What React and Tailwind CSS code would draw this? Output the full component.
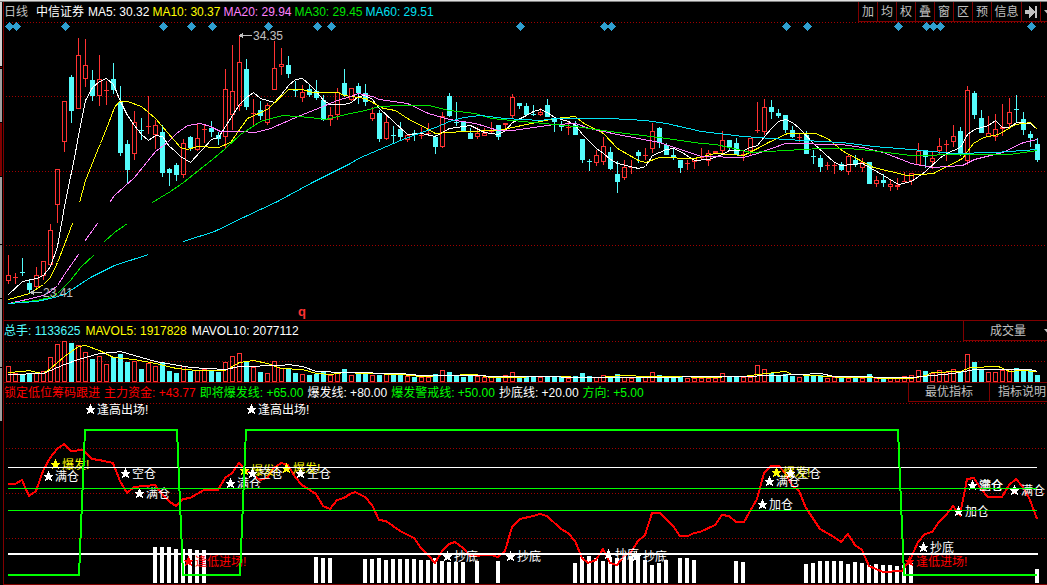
import React from "react";

// [high, body top, body bottom, low, up]; equal top and bottom draw a doji.
const CANDLES = [
  [255, 275, 281, 284, 1], [273, 277, 277, 284, 1], [258, 272, 272, 276, 0], [280, 283, 290, 293, 0],
  [267, 275, 287, 288, 1], [261, 261, 276, 280, 1], [224, 230, 265, 265, 1], [169, 169, 205, 223, 1],
  [101, 101, 142, 152, 1], [75, 77, 111, 123, 0], [38, 55, 109, 109, 1], [39, 65, 79, 87, 1],
  [70, 80, 96, 101, 0], [55, 79, 96, 106, 1], [81, 90, 90, 105, 1], [63, 79, 90, 94, 0],
  [86, 102, 153, 156, 0], [140, 144, 170, 184, 0], [111, 122, 154, 160, 1], [118, 130, 130, 140, 0],
  [96, 126, 126, 134, 1], [120, 125, 135, 149, 1], [125, 132, 173, 177, 0], [168, 169, 173, 186, 0],
  [163, 165, 175, 181, 0], [139, 143, 175, 178, 1], [136, 137, 148, 151, 0], [124, 138, 150, 151, 1],
  [125, 129, 129, 143, 1], [121, 128, 132, 137, 0], [132, 135, 139, 145, 0], [69, 89, 137, 148, 1],
  [45, 91, 115, 130, 1], [35, 62, 106, 111, 1], [59, 69, 107, 110, 0], [99, 113, 113, 127, 1],
  [101, 110, 116, 120, 0], [103, 105, 123, 125, 1], [41, 68, 90, 90, 1], [48, 64, 67, 75, 1],
  [56, 65, 74, 78, 0], [81, 90, 90, 97, 0], [85, 92, 98, 102, 1], [85, 89, 95, 97, 0],
  [80, 91, 98, 100, 0], [95, 100, 120, 121, 0], [107, 115, 120, 126, 1], [88, 92, 115, 120, 1],
  [69, 83, 95, 97, 0], [88, 88, 100, 101, 1], [83, 86, 93, 104, 0], [84, 93, 102, 106, 0],
  [107, 113, 119, 121, 1], [110, 113, 139, 142, 0], [115, 122, 139, 140, 1], [126, 135, 135, 143, 0],
  [122, 129, 137, 140, 0], [134, 135, 140, 142, 1], [130, 133, 133, 141, 0], [127, 135, 135, 139, 1],
  [123, 133, 133, 135, 1], [135, 137, 147, 154, 0], [112, 116, 147, 148, 1], [93, 96, 116, 117, 0],
  [102, 122, 122, 126, 0], [121, 121, 131, 132, 0], [128, 133, 139, 139, 0], [127, 133, 137, 139, 1],
  [128, 133, 136, 136, 1], [122, 131, 131, 134, 1], [125, 125, 137, 140, 0], [123, 123, 125, 130, 1],
  [94, 97, 116, 118, 1], [103, 103, 106, 109, 0], [103, 106, 115, 116, 0], [105, 114, 114, 116, 0],
  [108, 112, 115, 116, 1], [99, 105, 117, 117, 0], [117, 118, 122, 132, 0], [121, 124, 127, 131, 0],
  [122, 127, 127, 135, 1], [121, 125, 135, 135, 0], [139, 139, 160, 163, 0], [159, 161, 161, 171, 0],
  [150, 155, 163, 166, 1], [137, 146, 162, 165, 1], [147, 152, 169, 170, 0], [161, 174, 182, 193, 0],
  [160, 167, 178, 180, 1], [160, 167, 167, 174, 1], [150, 152, 156, 163, 0], [148, 155, 155, 160, 1],
  [123, 131, 149, 153, 1], [127, 128, 143, 148, 0], [143, 145, 155, 155, 0], [148, 155, 158, 160, 0],
  [160, 160, 168, 173, 0], [160, 163, 163, 170, 1], [158, 158, 162, 169, 1], [148, 157, 157, 159, 1],
  [150, 153, 161, 166, 1], [151, 151, 153, 154, 1], [131, 140, 151, 153, 1], [140, 140, 148, 150, 0],
  [138, 143, 155, 155, 0], [150, 154, 154, 161, 1], [138, 138, 151, 155, 1], [102, 130, 130, 133, 1],
  [99, 107, 132, 135, 1], [100, 107, 112, 119, 0], [109, 113, 116, 118, 0], [115, 115, 130, 133, 0],
  [126, 130, 137, 138, 0], [133, 137, 137, 142, 1], [131, 135, 154, 154, 0], [150, 156, 156, 164, 0],
  [155, 158, 167, 172, 0], [162, 165, 165, 170, 1], [162, 165, 165, 174, 1], [162, 164, 170, 171, 0],
  [154, 156, 172, 175, 1], [155, 160, 165, 167, 0], [158, 162, 168, 172, 1], [162, 162, 184, 184, 0],
  [176, 180, 184, 187, 1], [174, 180, 183, 187, 0], [179, 184, 187, 191, 1], [178, 185, 187, 190, 1],
  [172, 181, 181, 182, 1], [173, 173, 181, 185, 1], [143, 151, 165, 165, 1], [150, 150, 157, 168, 0],
  [152, 158, 162, 169, 1], [138, 146, 151, 154, 1], [140, 144, 144, 161, 1], [125, 136, 142, 147, 1],
  [127, 131, 154, 156, 0], [86, 90, 161, 165, 1], [91, 93, 115, 119, 0], [110, 118, 133, 133, 0],
  [116, 133, 137, 137, 1], [114, 129, 137, 141, 1], [104, 127, 129, 136, 1], [98, 112, 124, 128, 1],
  [95, 109, 109, 122, 0], [112, 119, 130, 135, 0], [131, 134, 138, 147, 0], [138, 144, 160, 162, 0],
];

// Top edge of each volume bar.
const VOLUMES = [
  366, 373, 375, 374, 373, 371, 357, 344, 341, 343, 345, 352, 359, 356, 364, 357, 354, 362, 361, 369,
  363, 366, 362, 371, 373, 366, 371, 370, 369, 371, 372, 362, 356, 353, 361, 367, 372, 373, 361, 368,
  369, 373, 374, 375, 374, 371, 375, 372, 369, 375, 373, 373, 375, 375, 374, 374, 374, 376, 377, 377,
  377, 374, 370, 372, 375, 377, 375, 376, 377, 377, 378, 375, 372, 376, 376, 376, 377, 376, 377, 377,
  378, 376, 373, 376, 377, 375, 376, 374, 377, 378, 376, 376, 372, 375, 377, 378, 376, 378, 378, 378,
  378, 378, 373, 377, 377, 377, 377, 365, 369, 373, 376, 374, 376, 377, 375, 375, 375, 378, 377, 377,
  378, 378, 378, 374, 378, 377, 378, 377, 376, 375, 370, 371, 373, 370, 372, 369, 372, 354, 362, 370,
  372, 372, 370, 369, 368, 370, 370, 375,
];

const PRICE_LINES = [
  {
    color: "#fff",
    parts: [
      "8,294 22,281 36,278 43,275 50,266 57,246 64,206 75,152 78,135 85,100 92,87 99,81 106,78 113,84 120,101 127,115 134,125 141,134 148,140 155,135 162,136 169,146 174,150 180,156 190,162 201,150 211,139 218,137 225,126 232,115 239,104 246,97 253,92 260,98 274,102 281,94 288,85 295,79 302,78 309,84 316,91 323,100 330,104 344,104 351,102 358,96 365,95 372,99 379,108 393,121 407,134 421,133 435,136 442,132 449,128 470,125 484,132 498,134 505,130 512,122 526,115 533,111 540,109 547,112 554,117 568,121 575,125 582,134 596,148 603,153 610,159 617,163 638,168 645,166 652,155 666,149 673,148 680,151 694,160 708,159 722,154 729,150 743,150 750,147 757,145 764,136 771,128 778,121 785,119 792,122 799,128 813,143 834,162 841,165 862,163 869,167 883,175 898,184 911,181 925,171 939,158 946,153 960,147 967,134 974,129 988,125 995,120 1002,127 1009,127 1016,122 1030,123 1037,129",
    ],
  },
  {
    color: "#ff0",
    parts: [
      "8,299 22,295 29,293 43,284 50,277 57,262 64,244 72,223",
      "79,202 85,180 97,150 100,143 108,123 114,107 119,101 127,101 141,106 155,118 167,132 180,147 187,149 197,146 218,147 230,142 247,118 267,109 288,89 302,89 312,92 337,92 344,95 365,98 383,108 395,110 407,118 428,129 435,133 463,131 498,130 512,127 540,121 554,118 575,116 582,122 603,133 617,148 638,160 645,162 659,157 694,158 715,153 743,155 757,148 768,142 787,133 815,133 827,138 843,151 873,167 907,175 933,173 962,158 973,143 983,137 998,134 1015,124 1030,122 1037,129",
    ],
  },
  {
    color: "#ff80ff",
    parts: [
      "8,303 22,300 43,295 50,291 57,285 64,274 78,254",
      "84,241 97,223",
      "109,202 114,195 134,177 155,151 167,142 176,133 187,125 200,123 210,126 220,131 240,131 255,132 270,128 300,115 320,107 337,100 350,96 358,93 372,96 379,99 407,103 428,113 449,119 475,123 498,130 512,130 540,126 554,124 575,123 589,128 617,134 659,142 680,149 701,156 743,157 757,153 771,148 785,143 841,144 862,147 883,152 911,163 932,167 962,165 974,159 1002,152 1023,142 1037,139",
    ],
  },
  {
    color: "#00e600",
    parts: [
      "8,303 36,300 50,297 57,293 70,280 80,267 94,254",
      "104,241 114,232 127,223",
      "152,202 160,197 170,191 183,182 203,166 212,159 225,148 240,134 260,121 282,115 310,117 325,119 350,113 365,110 379,106 400,105 428,105 449,110 475,113 491,118 533,122 575,126 617,132 659,137 701,143 715,144 729,147 750,152 785,150 820,148 848,148 870,150 911,155 962,154 1009,154 1037,150",
    ],
  },
  {
    color: "#02e2f4",
    parts: [
      "8,303 36,301 50,298 64,294 90,277 114,265 148,254",
      "183,241 214,231 245,216 277,201 312,182 350,163 358,158 379,149 400,140 421,132 435,127 449,121 463,117 480,115 505,118 540,120 554,118 610,118 645,120 666,123 701,131 743,136 785,139 841,142 873,146 911,149 953,153 995,152 1037,149",
    ],
  },
];

const VOLUME_LINES = [
  {
    color: "#ff0",
    parts: [
      "8,372 22,371 29,370 36,372 43,373 50,368 64,356 78,346 85,345 99,350 113,357 134,359 155,363 176,368 197,370 225,370 239,362 253,360 267,363 281,368 302,369 316,373 330,374 344,372 365,373 400,374 420,376 445,375 475,374 490,377 512,377 540,376 600,377 620,375 650,376 680,376 701,377 743,376 757,374 775,372 785,371 792,374 813,375 841,377 911,378 925,375 932,372 960,371 970,367 998,366 1009,371 1020,370 1037,371",
    ],
  },
  {
    color: "#fff",
    parts: [
      "8,374 43,373 64,364 78,359 99,353 113,352 120,351 134,355 155,361 190,367 225,369 239,366 281,365 288,364 302,366 316,371 344,372 400,373 420,375 470,375 500,376 620,377 743,376 800,374 820,373 834,376 911,377 953,373 974,369 1030,369 1037,371",
    ],
  },
];

const FUND_LINE =
  "8,484 15,484 22,480 29,496 36,491 43,471 50,458 57,449 64,444 71,451 83,450 92,459 99,460 113,463 120,481 127,493 134,487 155,485 162,494 170,502 176,506 183,499 190,498 204,490 218,490 225,478 232,473 239,463 246,470 260,480 267,478 274,468 281,463 288,465 295,477 302,485 316,494 323,506 330,509 337,500 344,498 350,494 355,492 365,497 372,505 379,520 386,521 400,531 414,538 421,548 428,555 435,563 442,551 449,544 455,542 463,548 470,556 491,555 498,557 505,551 512,527 520,519 533,516 540,514 547,516 561,529 568,533 575,541 582,558 588,563 596,560 603,549 610,563 617,565 624,556 631,552 638,541 645,535 652,513 660,513 673,526 680,536 688,536 694,533 700,532 715,525 722,515 729,516 736,522 744,522 757,499 764,473 771,466 779,466 785,473 792,485 799,491 806,508 820,529 834,537 841,542 848,534 855,545 862,550 869,566 883,572 902,571 911,558 918,542 925,534 932,532 939,522 946,515 953,506 960,515 967,479 974,478 981,489 988,497 1002,497 1009,485 1016,479 1023,487 1030,500 1037,519";

const DIRECTION_LINE =
  "8,575 79,575 85,430 177,430 183,575 240,575 246,430 898,430 904,575 1037,575";

// First candle index of each run, then the bar tops in that run.
const BAR_RUNS = [
  [21, [547, 547, 547, 549, 549, 549, 550, 550]],
  [44, [557, 558, 558]],
  [51, [559, 559, 558, 560, 559, 559, 559, 559, 560, 560, 558, 561, 562, 562, 562]],
  [67, [561]],
  [70, [561]],
  [81, [563, 557, 556, 558, 561, 557, 558, 556, 556, 557, 560, 565, 563, 560]],
  [96, [558, 558, 560]],
  [104, [561, 562]],
  [114, [564, 563, 561, 561, 561, 561, 564, 562, 563, 565, 564, 565, 565, 566, 565, 563]],
  [147, [569]],
];

const SIGNALS = [
  [90, 409, "逢高出场!", "#fff"], [251, 409, "逢高出场!", "#fff"],
  [55, 464, "爆发!", "#ff0"], [48, 476, "满仓", "#fff"],
  [125, 473, "空仓", "#fff"], [139, 493, "满仓", "#fff"],
  [230, 483, "满仓", "#fff"], [244, 470, "爆发!", "#ff0"],
  [252, 473, "空仓", "#fff"], [286, 468, "爆发!", "#ff0"],
  [300, 473, "空仓", "#fff"], [188, 561, "逢低进场!", "#f00"],
  [447, 556, "抄底", "#fff"], [510, 556, "抄底", "#fff"],
  [608, 554, "抄底", "#fff"], [636, 556, "抄底", "#fff"],
  [769, 481, "满仓", "#fff"], [776, 472, "爆发!", "#ff0"],
  [790, 473, "空仓", "#fff"], [762, 504, "加仓", "#fff"],
  [923, 547, "抄底", "#fff"], [909, 561, "逢低进场!", "#f00"],
  [958, 511, "加仓", "#fff"], [972, 485, "满仓", "#fff"],
  [972, 485, "空仓", "#fff"], [1014, 490, "满仓", "#fff"],
];

const EVENTS = [9, 16, 65, 163, 191, 212, 268, 317, 331, 520, 604, 611, 786, 807, 898, 926, 933, 940, 1031];

const UP = "#ff3232";
const DOWN = "#54fcfc";
const xAt = (i) => 8 + 7 * i;

function Grid({ rows }) {
  return rows.map((y) => (
    <line key={y} x1="6" x2="1046" y1={y + 0.5} y2={y + 0.5} stroke="#a00000" strokeDasharray="1 2" />
  ));
}

function Lines({ lines }) {
  return lines.map((line) =>
    line.parts.map((points) => (
      <polyline key={line.color + points.slice(0, 8)} points={points} fill="none" stroke={line.color} transform="translate(.5 .5)" />
    ))
  );
}

function Candle({ x, data }) {
  const [high, top, bottom, low, up] = data;
  if (top === bottom) {
    const color = up ? UP : DOWN;
    return (
      <g fill={color}>
        <rect x={x} y={high} width="1" height={low - high} />
        <rect x={x - 2} y={top} width="5" height="1" />
      </g>
    );
  }
  if (!up) {
    return (
      <g fill={DOWN}>
        <rect x={x} y={high} width="1" height={low - high} />
        <rect x={x - 2} y={top} width="5" height={bottom - top} />
      </g>
    );
  }
  return (
    <g fill={UP}>
      <rect x={x} y={high} width="1" height={top - high} />
      <rect x={x} y={bottom} width="1" height={low - bottom} />
      <rect x={x - 1.5} y={top + 0.5} width="4" height={Math.max(1, bottom - top - 1)} fill="none" stroke={UP} />
    </g>
  );
}

function PriceChart() {
  return (
    <svg viewBox="4 22 1043 298" className="block h-auto w-full" shapeRendering="crispEdges" role="img" aria-label="日线 K线图">
      <Grid rows={[22, 96, 171, 245]} />
      {EVENTS.map((x) => (
        <path key={x} d={`M${x + 0.5} 22l4.5 4.5-4.5 4.5-4.5-4.5z`} fill="#2f9fd0" />
      ))}
      {CANDLES.map((data, i) => (
        <Candle key={i} x={xAt(i)} data={data} />
      ))}
      <Lines lines={PRICE_LINES} />
      <g fill="#c0c0c0" stroke="none" fontSize="12">
        <path d="M239 35.5l4-3v2.500h9v1h-9v2.500z" />
        <text x="253" y="40">34.35</text>
        <path d="M30 292.500l4-3v2.500h8v1h-8v2.500z" />
        <text x="43" y="297">23.41</text>
      </g>
      <text x="298" y="316" fontSize="13" fontWeight="700" fill={UP}>q</text>
    </svg>
  );
}

function VolumeChart() {
  return (
    <svg viewBox="4 341 1043 41" className="block h-auto w-full" shapeRendering="crispEdges" role="img" aria-label="成交量">
      <Grid rows={[341, 361]} />
      {VOLUMES.map((y, i) =>
        CANDLES[i][4] ? (
          <rect key={i} x={xAt(i) - 1.5} y={y + 0.5} width="4" height={381 - y} fill="none" stroke={UP} />
        ) : (
          <rect key={i} x={xAt(i) - 2} y={y} width="5" height={382 - y} fill={DOWN} />
        )
      )}
      <Lines lines={VOLUME_LINES} />
    </svg>
  );
}

function Signal({ x, y, label, color }) {
  return (
    <g fill={color}>
      <path
        d="M0-6l1.500 4h4.500l-3.600 2.800 1.400 4.400L0 2.600l-3.800 2.600 1.400-4.400L-6-2h4.500z"
        transform={`translate(${x + 0.5} ${y + 0.5})`}
      />
      <text x={x + 7} y={y + 5} fontSize="12">{label}</text>
    </g>
  );
}

function FundChart() {
  return (
    <svg viewBox="4 403 1043 181" className="block h-auto w-full" shapeRendering="crispEdges" role="img" aria-label="主力资金">
      <Grid rows={[403, 448, 493, 538]} />
      {BAR_RUNS.map(([start, tops]) =>
        tops.map((y, k) => (
          <rect key={start + k} x={xAt(start + k) - 2} y={y} width="4" height={583 - y} fill="#fff" />
        ))
      )}
      <polyline points={FUND_LINE} fill="none" stroke="#f00" strokeWidth="2" />
      {SIGNALS.map(([x, y, label, color], i) => (
        <Signal key={i} x={x} y={y} label={label} color={color} />
      ))}
      <rect x="8" y="467" width="1029" height="1" fill="#fff" />
      <rect x="8" y="488" width="1029" height="1" fill="#0f0" />
      <rect x="8" y="510" width="1029" height="1" fill="#0f0" />
      <rect x="8" y="553" width="1030" height="2" fill="#fff" />
      <polyline points={DIRECTION_LINE} fill="none" stroke="#0f0" strokeWidth="2" />
    </svg>
  );
}

function Readout({ items, gap = "gap-1" }) {
  return (
    <div className={`flex min-w-0 flex-1 overflow-hidden leading-5 whitespace-nowrap ${gap}`}>
      {items.map(([text, color]) => (
        <span key={text} className={color}>{text}</span>
      ))}
    </div>
  );
}

const TOOLS = ["加", "均", "权", "叠", "窗", "区", "预"];

export default function App() {
  return (
    <main className="flex min-h-screen flex-col overflow-hidden bg-black font-['Liberation_Sans','Noto_Sans_CJK_SC',sans-serif] text-xs text-[#c0c0c0]">
      <div className="h-[2px] border-b border-[#808080] bg-[#e0e0e0]" />
      <div className="flex flex-1">
        <div className="flex w-[3px] shrink-0 flex-col gap-px pr-px">
          <div className="h-16 bg-[#d0d0d0]" />
          <div className="h-px bg-[#800000]" />
          <div className="h-[53px] bg-[#a0a0a0]" />
          <div className="h-[53px] bg-[#800000]" />
          <div className="h-[67px] bg-[#a0a0a0]" />
          <div className="h-[53px] bg-[#a0a0a0]" />
          <div className="h-[68px] bg-[#a0a0a0]" />
          <div className="h-[53px] bg-[#a0a0a0]" />
        </div>
        <div className="min-w-0 flex-1 border-l border-[#800000]">
          <header className="flex h-5">
            <Readout
              gap="gap-[3px]"
              items={[
                ["日线", "mr-[5px]"],
                ["中信证券", "mr-px text-white"],
                ["MA5: 30.32", "text-white"],
                ["MA10: 30.37", "text-[#ffff00]"],
                ["MA20: 29.94", "text-[#ff80ff]"],
                ["MA30: 29.45", "text-[#00e600]"],
                ["MA60: 29.51", "text-[#02e2f4]"],
              ]}
            />
            <nav className="flex shrink-0 border-b border-[#800000]">
              {TOOLS.map((name) => (
                <button key={name} className="w-[19px] border-l border-[#800000] text-center leading-5">{name}</button>
              ))}
              <button className="w-[30px] border-l border-[#800000] text-center leading-5">信息</button>
              <button aria-label="跳到最新" className="flex w-[19px] items-center justify-center border-l border-[#800000]">
                <svg viewBox="0 0 12 12" className="size-3" fill="#c0c0c0" shapeRendering="crispEdges">
                  <path d="M0 4h4V0l6 6-6 6V8H0zM10 0h2v12h-2z" />
                </svg>
              </button>
              <button aria-label="更多" className="flex w-[7px] items-center overflow-hidden border-l border-[#800000] pl-[3px]">
                <svg viewBox="0 0 7 4" className="h-1 w-[7px] shrink-0" fill="#c0c0c0">
                  <path d="M0 0h7L3.500 4z" />
                </svg>
              </button>
            </nav>
          </header>
          <PriceChart />

          <section className="border-t border-[#800000]">
            <div className="flex h-5">
              <Readout
                gap="gap-[5px]"
                items={[
                  ["总手: 1133625", "text-[#54fcfc]"],
                  ["MAVOL5: 1917828", "text-[#ffff00]"],
                  ["MAVOL10: 2077112", "text-white"],
                ]}
              />
              <div className="flex w-[84px] shrink-0 items-center overflow-hidden border-b border-l border-[#800000]">
                <select aria-label="副图指标" className="w-20 shrink-0 appearance-none bg-black pl-[26px] leading-[18px]">
                  <option>成交量</option>
                </select>
                <svg viewBox="0 0 7 4" className="h-1 w-[7px] shrink-0" fill="#c0c0c0">
                  <path d="M0 0h7L3.500 4z" />
                </svg>
              </div>
            </div>
            <VolumeChart />
          </section>

          <section className="border-y border-[#800000]">
            <div className="flex h-5">
              <Readout
                items={[
                  ["锁定低位筹码跟进", "text-[#ff0000]"],
                  ["主力资金: +43.77", "text-[#ff0000]"],
                  ["即将爆发线: +65.00", "text-[#00ff00]"],
                  ["爆发线: +80.00", "text-white"],
                  ["爆发警戒线: +50.00", "text-[#00ff00]"],
                  ["抄底线: +20.00", "text-white"],
                  ["方向: +5.00", "text-[#00ff00]"],
                ]}
              />
              <div className="flex h-[19px] shrink-0 border-b border-[#800000]">
                <button className="w-[81px] border-l border-[#800000] leading-[19px]">最优指标</button>
                <button className="w-[58px] border-l border-[#800000] pl-2 text-left leading-[19px] whitespace-nowrap">指标说明</button>
              </div>
            </div>
            <FundChart />
          </section>
        </div>
      </div>
    </main>
  );
}
